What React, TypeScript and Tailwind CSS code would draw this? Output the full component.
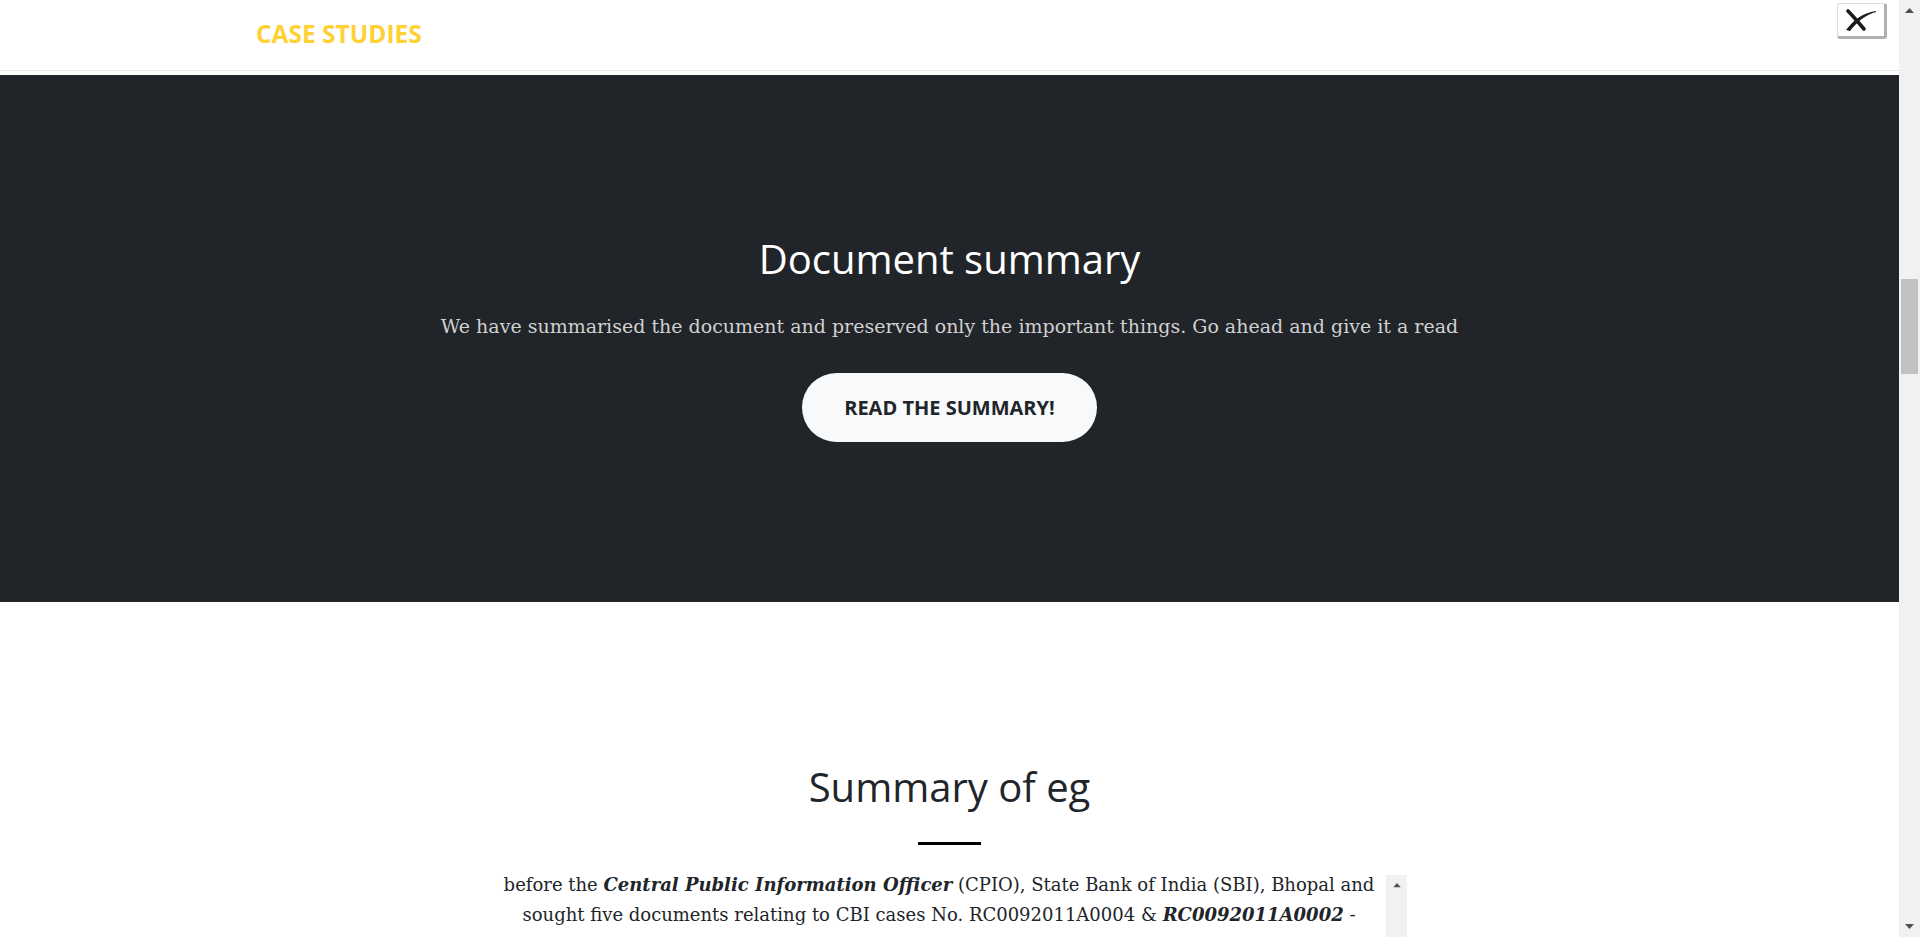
import React from "react";

const openSans = { fontFamily: '"Open Sans", "Liberation Sans", sans-serif' };
const serif = { fontFamily: '"DejaVu Serif", "Liberation Serif", serif' };

function CloseButton() {
    return (
        <button className="mt-[3px] mr-[12px] flex h-[36px] w-[50px] items-center justify-center rounded-[3px] border border-[#dcdcdc] border-r-[3px] border-b-[3px] border-r-[#b0b0b0] border-b-[#b0b0b0] bg-white">
            <svg width="34" height="24" viewBox="0 0 34 24">
                <path d="M4 3 C 9 8, 14 14, 20 21" stroke="#1b1b1b" strokeWidth="3.6" strokeLinecap="round" fill="none" />
                <path d="M2 22 C 10 12, 18 5, 32 3 L 32 4 C 21 7, 13 14, 6 23 Z" fill="#1b1b1b" />
            </svg>
        </button>
    );
}

function PageScrollbar() {
    return (
        <div className="flex h-full w-[21px] flex-col items-center bg-[#f1f1f1]">
            <div className="flex h-[21px] w-full items-center justify-center">
                <svg width="9" height="6" viewBox="0 0 9 6"><path d="M0 5 L4.5 0 L9 5 Z" fill="#505050" /></svg>
            </div>
            <div className="mt-[258px] h-[95px] w-[17px] bg-[#c1c1c1]" />
            <div className="flex-1" />
            <div className="flex h-[21px] w-full items-center justify-center">
                <svg width="9" height="6" viewBox="0 0 9 6"><path d="M0 0 L4.5 5 L9 0 Z" fill="#505050" /></svg>
            </div>
        </div>
    );
}

function BoxScrollbar() {
    return (
        <div className="flex w-[21px] shrink-0 flex-col items-center bg-[#f1f1f1]">
            <div className="flex h-[21px] w-full items-center justify-center">
                <svg width="8" height="5" viewBox="0 0 9 6"><path d="M0 5 L4.5 0 L9 5 Z" fill="#505050" /></svg>
            </div>
        </div>
    );
}

export default function App() {
    return (
        <div className="flex h-[937px] w-[1920px] overflow-hidden bg-white">
            <div className="flex w-[1899px] flex-col">
                {/* Top bar */}
                <header className="flex h-[71px] shrink-0 items-start justify-between border-b border-[#e6e6e6]">
                    <div className="flex h-[70px] items-center pl-[256px] pb-[2px]">
                        <span style={openSans} className="text-[24.5px] font-bold text-[#fed136]">CASE STUDIES</span>
                    </div>
                    <CloseButton />
                </header>
                <div className="h-[4px] shrink-0 bg-white" />

                {/* Dark hero */}
                <section className="flex h-[527px] shrink-0 flex-col items-center bg-[#212529] pt-[160px]">
                    <h2 style={openSans} className="text-[40px] leading-[48px] font-normal text-white">Document summary</h2>
                    <p style={serif} className="mt-[28px] text-[19px] leading-[30px] text-[#d0d0d0]">
                        We have summarised the document and preserved only the important things. Go ahead and give it a read
                    </p>
                    <button style={openSans} className="mt-[32px] h-[69px] rounded-full bg-[#f8f9fa] px-[42px] text-[20px] font-bold text-[#212529]">
                        READ THE SUMMARY!
                    </button>
                </section>

                {/* Summary */}
                <section className="flex flex-1 flex-col items-center pt-[161px]">
                    <h2 style={openSans} className="text-[40px] leading-[48px] font-normal text-[#212529]">Summary of eg</h2>
                    <div className="mt-[31px] h-[3px] w-[63px] bg-black" />
                    <div className="mt-[30px] flex w-[915px] flex-1 overflow-hidden">
                        <div className="flex-1 overflow-hidden">
                            <p style={serif} className="-mt-[5px] text-center text-[18px] leading-[30px] text-[#212529]">
                                before the <b className="italic">Central Public Information Officer</b> (CPIO), State Bank of India (SBI), Bhopal and
                                <br />
                                sought five documents relating to CBI cases No. RC0092011A0004 &amp; <b className="italic">RC0092011A0002</b> -
                                <br />
                                A and a copy of which had after the action also dealt with and was examined by LIO
                            </p>
                        </div>
                        <BoxScrollbar />
                    </div>
                </section>
            </div>
            <PageScrollbar />
        </div>
    );
}
